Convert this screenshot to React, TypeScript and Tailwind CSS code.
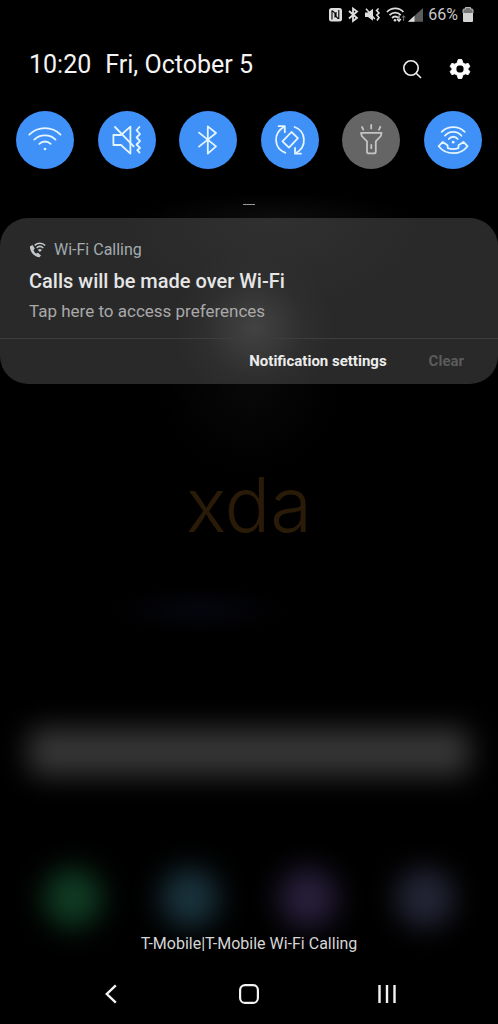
import type { ReactNode } from "react";

type Tile = { label: string; on: boolean; icon: ReactNode };

const tiles: Tile[] = [
  {
    label: "Wi-Fi",
    on: true,
    icon: (
      <>
        <path d="M13.3 23.7C22 15 36 15 44.5 23.7" />
        <path d="M18.3 28.6C24 23 34 23 39.5 28.6" />
        <path d="M23.3 32.9C26.5 29.7 31.5 29.7 34.7 32.9" />
        <circle cx="29" cy="38" r="1.3" fill="currentColor" stroke="none" />
      </>
    ),
  },
  {
    label: "Vibrate",
    on: true,
    icon: (
      <>
        <path d="M15.4 24H23L32.4 15.6V42.6L23 34H15.4Z" />
        <path d="M17 16L35.7 35.3" />
        <path d="M41.4 16L38.6 19.4L42 23L38.6 26.5L42 30L38.6 33.5L42 37L39.2 39.2L41.5 41.5" />
      </>
    ),
  },
  {
    label: "Bluetooth",
    on: true,
    icon: <path d="M20 21.6L37 35.4L28.8 42.6V15.4L37 22L20 35.6" />,
  },
  {
    label: "Auto rotate",
    on: true,
    icon: (
      <>
        <path d="M24.4 41.8C13 37.5 11.5 22.5 22.8 16" />
        <path d="M17.6 15.2H23.8V21.2" />
        <path d="M33.6 16C45 20 46.5 35.5 35 42" />
        <path d="M40 42.7H34V36.8" />
        <path d="M30.5 21L36.9 27.2L28 36.6L21.5 30.4Z" />
      </>
    ),
  },
  {
    label: "Flashlight",
    on: false,
    icon: (
      <>
        <path d="M19 21.8H39.6L38.8 25L33.8 30.4V40.4Q33.8 42.4 31.8 42.4H27Q25 42.4 25 40.4V30.4L19.8 25Z" />
        <path d="M20 16L21.3 18.7M29.2 13.8V17.4M38.3 15.8L37 18.7M29.3 34V37.2" />
      </>
    ),
  },
  {
    label: "Wi-Fi Calling",
    on: true,
    icon: (
      <>
        <path d="M17.7 20.9C24 14.6 34.4 14.6 40.7 20.9" />
        <path d="M21 24.7C25.5 19.7 33 19.7 37.4 24.7" />
        <path d="M24.8 28C27 25 31.5 25 33.7 28" />
        <circle cx="29.2" cy="31.2" r="1.4" fill="currentColor" stroke="none" />
        <path d="M18.8 30.9L14.7 35.2C22 44.5 36.5 44.5 43.5 35.2L39.4 30.9L34.6 34.2L34.4 37.2C31 38.5 27.3 38.5 23.8 37.2L23.5 34.2Z" />
      </>
    ),
  },
];

const glows = ["bg-[#0f3b23]", "bg-[#19323c]", "bg-[#281f3b]", "bg-[#232536]"];

function StatusBar() {
  return (
    <div className="flex h-[30px] items-center justify-end pr-6 text-[#dedede]">
      <svg width="96" height="18" viewBox="328 6 96 18" fill="none" aria-label="NFC, Bluetooth, vibrate, Wi-Fi, signal">
        <rect x="329" y="8" width="13" height="13.5" rx="2.5" fill="currentColor" />
        <path d="M332 19.5V10.5M338.8 19V10M332.4 10.6L335 13.4V17.5M338.4 18.8L336 16.4V12" stroke="#000" strokeWidth="1.1" />
        <path d="M349 11L357 18L353 21V8.5L357 11.5L349 18.5" stroke="currentColor" strokeWidth="1.8" />
        <path d="M365 12.5H368L373 8.7V20.7L368 17H365Z" fill="currentColor" />
        <path d="M366 8.7L374.8 19" stroke="currentColor" strokeWidth="1.5" />
        <path d="M378.6 8.5L376.6 10.5L379 13L376.8 15L379 17.5L377 20.5" stroke="currentColor" strokeWidth="1.6" />
        <path d="M387 12C391.5 7.2 399 7.2 403.4 12M389.5 15.2C393 11.7 397.5 11.7 400.8 15.2M392 18C394 16 396.5 16 398.2 18" stroke="currentColor" strokeWidth="1.8" />
        <circle cx="395" cy="20.2" r="1.3" fill="currentColor" />
        <path d="M399 15.5V21M397 19L399 21.3L401 19" stroke="currentColor" strokeWidth="1.2" />
        <path d="M403.6 21V16M402 17.6L403.6 15.6L405.2 17.6" stroke="#777" strokeWidth="1" />
        <path d="M408 21.7L423 8V21.7Z" fill="#5c5c5c" />
        <path d="M408 21.7L414.5 15.8V21.7Z" fill="currentColor" />
      </svg>
      <span className="ml-1 text-base leading-5 text-[#c9c9c9]">66%</span>
      <svg className="ml-1" width="12" height="18" viewBox="0 0 12 18" aria-label="Battery">
        <path d="M3.5 1.5H8.5V3H10Q11 3 11 4V7H1V4Q1 3 2 3H3.5Z" fill="#777" />
        <path d="M1 7H11V15Q11 16 10 16H2Q1 16 1 15Z" fill="#d4d4d4" />
        <path d="M1 7V4Q1 3 2 3H3.5V1.5H8.5V3H10Q11 3 11 4V7" fill="none" stroke="#bbb" />
      </svg>
    </div>
  );
}

function Header() {
  return (
    <header className="flex items-center pt-3 pr-6 pl-[29px]">
      <h1 className="flex flex-1 gap-[14px] text-[25px] leading-[46px] font-normal text-[#f4f4f4]">
        <span>10:20</span>
        <span>Fri, October 5</span>
      </h1>
      <div className="flex gap-[20px] pt-2">
        <button type="button" aria-label="Search" className="flex size-7 items-center justify-center">
          <svg width="24" height="24" viewBox="0 0 24 24" fill="none" stroke="#f0f0f0" strokeWidth="1.6">
            <circle cx="11" cy="11" r="7.2" />
            <path d="M16.2 16.2L21 21" />
          </svg>
        </button>
        <button type="button" aria-label="Settings" className="flex size-7 items-center justify-center">
          <svg width="24" height="24" viewBox="0 0 24 24">
            <path
              fillRule="evenodd"
              fill="#fff"
              stroke="#fff"
              strokeLinejoin="round"
              d="M10.2 2.6H13.8L14.7 5.8L17.2 7.2L20.2 6.4L21.8 9.4L19.6 12L21.8 14.6L20.2 17.6L17.2 16.8L14.7 18.2L13.8 21.4H10.2L9.3 18.2L6.8 16.8L3.8 17.6L2.2 14.6L4.4 12L2.2 9.4L3.8 6.4L6.8 7.2L9.3 5.8ZM12 7.9A4.1 4.1 0 1 0 12 16.1A4.1 4.1 0 1 0 12 7.9Z"
            />
          </svg>
        </button>
      </div>
    </header>
  );
}

function NotificationCard() {
  return (
    <section className="rounded-[28px] bg-[#292929] bg-[radial-gradient(circle_at_51%_66%,#424242_0px,#3a3a3a_22px,#2e2e2e_50px,transparent_80px),radial-gradient(ellipse_at_55%_0%,#303030_0px,transparent_150px)]">
      <div className="px-[29px] pt-5 pb-3">
        <div className="flex items-center gap-2 text-base leading-6 text-[#a3abb0]">
          <svg width="17" height="17" viewBox="0 0 17 17" fill="none" stroke="#c2c7ca" aria-hidden="true">
            <path d="M1 4.2C.4 8.8 5.2 15.2 10.4 15.3L12 13.4L9 10.7L7.2 11.6C5.8 10.8 4.8 9.4 4.6 7.9L5.8 6.6L3.6 2.9Z" fill="#c2c7ca" stroke="none" />
            <path d="M5.6 3.4C8.8.4 13.2.5 16.2 3.6M7.6 5.9C9.6 4 12.3 4.1 14.3 6" strokeWidth="1.5" />
            <path d="M8.9 7.9Q10.9 6.2 12.9 7.9L10.9 10Z" fill="#c2c7ca" stroke="none" />
          </svg>
          <span>Wi-Fi Calling</span>
        </div>
        <h2 className="mt-1 text-[20px] leading-[30px] font-medium text-[#e6e6e6]">Calls will be made over Wi-Fi</h2>
        <p className="text-[17px] leading-[30px] text-[#a9a9a9]">Tap here to access preferences</p>
      </div>
      <div className="flex justify-end gap-[42px] border-t border-[#3d3d3d] pr-[34px] text-[15px] leading-[45px] font-bold">
        <button type="button" className="text-[#ececec]">Notification settings</button>
        <button type="button" className="text-[#5b5b5b]">Clear</button>
      </div>
    </section>
  );
}

function NavBar() {
  return (
    <nav className="flex justify-between px-[17.5%] pb-[14px] text-[#f3f3f3]" aria-label="System">
      <button type="button" aria-label="Back" className="flex h-8 w-12 items-center justify-center">
        <svg width="22" height="22" viewBox="0 0 22 22" fill="none" stroke="currentColor" strokeWidth="2.4">
          <path d="M15.8 2.3L6.8 11L15.8 19.7" />
        </svg>
      </button>
      <button type="button" aria-label="Home" className="flex h-8 w-12 items-center justify-center">
        <svg width="22" height="22" viewBox="0 0 22 22" fill="none" stroke="currentColor" strokeWidth="2.2">
          <rect x="2.1" y="2.1" width="17.8" height="17.8" rx="5" />
        </svg>
      </button>
      <button type="button" aria-label="Recents" className="flex h-8 w-12 items-center justify-center">
        <svg width="22" height="22" viewBox="0 0 22 22" fill="none" stroke="currentColor" strokeWidth="2.4">
          <path d="M3.5 2V20M11 2V20M18.5 2V20" />
        </svg>
      </button>
    </nav>
  );
}

export default function App() {
  return (
    <main className="flex min-h-screen flex-col overflow-hidden bg-black font-[Roboto,sans-serif]">
      <StatusBar />
      <Header />
      <div className="flex justify-between px-4 pt-[23px]">
        {tiles.map((tile) => (
          <button
            key={tile.label}
            type="button"
            aria-label={tile.label}
            aria-pressed={tile.on}
            className={
              tile.on
                ? "size-[58px] rounded-full bg-[#3f91f8] text-[#e4f5ff]"
                : "size-[58px] rounded-full bg-[#656565] text-[#c4c4c4]"
            }
          >
            <svg viewBox="0 0 58 58" fill="none" stroke="currentColor" strokeWidth="1.8" strokeLinecap="round" strokeLinejoin="round">
              {tile.icon}
            </svg>
          </button>
        ))}
      </div>
      <div className="flex h-[49px] items-center justify-center bg-[radial-gradient(ellipse_at_55%_100%,#0c0c0c_0px,transparent_140px)] pt-[22px]">
        <div className="h-px w-3 bg-[#999999]" />
      </div>
      <NotificationCard />
      <div className="flex justify-center bg-[radial-gradient(circle_at_50%_0%,#080808_0px,transparent_90px)] pt-[70px]">
        <span className="font-[Inter,sans-serif] text-[76px] leading-[100px] font-light text-[#2a1b08]">xda</span>
      </div>
      <div className="h-[140px] bg-[radial-gradient(ellipse_at_40%_40%,#05060d_0px,transparent_90px)]" />
      <div className="flex-1" />
      <div className="mx-7 h-12 rounded-xl bg-[#363636] blur-[14px]" />
      <div className="flex justify-between px-[43px] pt-[92px]">
        {glows.map((glow) => (
          <div key={glow} className={`size-[60px] rounded-full blur-[14px] ${glow}`} />
        ))}
      </div>
      <p className="relative mt-1 pb-[22px] text-center text-base leading-6 text-[#d6d6d6]">T-Mobile|T-Mobile Wi-Fi Calling</p>
      <NavBar />
    </main>
  );
}
